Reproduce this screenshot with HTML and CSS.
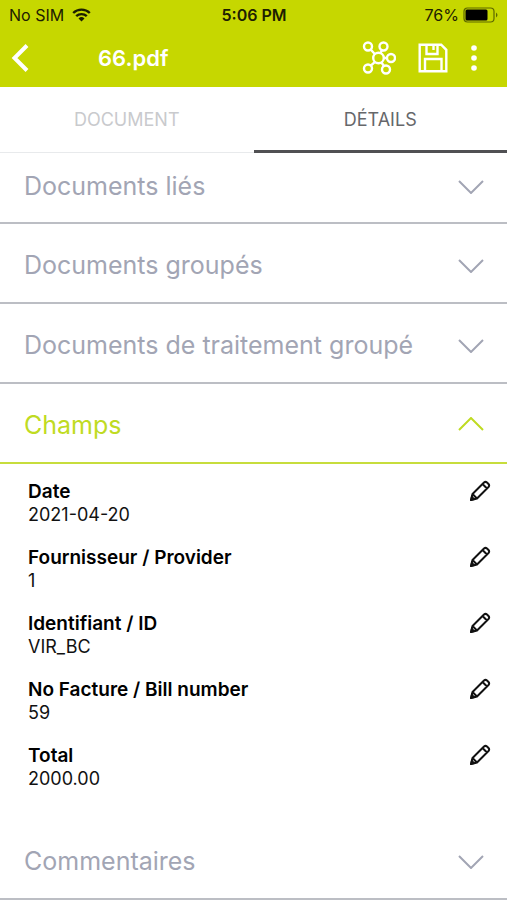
FILE: index.html
```html
<!DOCTYPE html>
<html lang="fr">
<head>
<meta charset="utf-8">
<meta name="viewport" content="width=device-width, initial-scale=1">
<title>66.pdf</title>
<link rel="stylesheet" href="styles.css">
</head>
<body>
<svg class="sprite" aria-hidden="true">
  <symbol id="down" viewBox="0 0 28 16"><path d="M2 3l12 12L26 3"/></symbol>
  <symbol id="up" viewBox="0 0 28 16"><path d="M2 13L14 1l12 12"/></symbol>
  <symbol id="pencil" viewBox="0 0 22 22"><path d="M2 20l1.500-6L15 2.500q1.500-1.300 3 0l1.500 1.500q1.300 1.500 0 3L8 18.500zM3.500 14L8 18.500M13.500 4l4.500 4.500"/><path class="tip" d="M1 21l1.300-6 4.700 4.700z"/></symbol>
</svg>
<header class="header">
  <div class="status">
    <div class="carrier">
      <span>No SIM</span>
      <svg width="19" height="14" viewBox="0 0 19 14" aria-hidden="true"><path d="M1.200 5a12 12 0 0 1 16.600 0M4.200 8.200a7.700 7.700 0 0 1 10.600 0" fill="none" stroke="currentColor" stroke-width="2.400"/><path d="M6.500 10.500a4.400 4.400 0 0 1 6 0l-3 3z" fill="currentColor"/></svg>
    </div>
    <span class="clock">5:06 PM</span>
    <div class="power">
      <span>76%</span>
      <svg width="36" height="16" viewBox="0 0 36 16" aria-hidden="true"><rect x="1" y="1" width="30" height="14" rx="3.500" fill="none" stroke="#5d6800" stroke-width="1.200"/><rect x="2.500" y="2.500" width="22" height="11" rx="1.500" fill="#000"/><path d="M33 5.500q3 2.500 0 5z" fill="#5d6800"/></svg>
    </div>
  </div>
  <div class="nav">
    <button class="icon-button" type="button" aria-label="Retour"><svg width="20" height="30" viewBox="0 0 20 30"><path d="M16 2.500L3.500 15 16 27.500" stroke-width="4"/></svg></button>
    <h1 class="title">66.pdf</h1>
    <div class="actions">
      <button class="icon-button" type="button" aria-label="Liens"><svg width="34" height="34" viewBox="0 0 34 34" stroke-width="2.400"><circle cx="16.500" cy="17" r="5.300"/><circle cx="6" cy="5.500" r="4"/><circle cx="21.500" cy="5.500" r="4"/><circle cx="29" cy="17" r="4"/><circle cx="6" cy="27.500" r="4"/><circle cx="24" cy="28.500" r="4"/><path d="M8.700 8.500l4.300 4.700M20 9.200l-1.600 3M21.700 17H25M8.800 24.600l4.200-3.800M22 25l-2.800-3.700"/></svg></button>
      <button class="icon-button" type="button" aria-label="Enregistrer"><svg width="30" height="30" viewBox="0 0 30 30" stroke-width="2.400"><path d="M1.700 1.700h21.500l5.100 5.100v21.500H1.700zM8.500 2v9h11V2M7 28V16h16.500v12M15.500 2v5"/></svg></button>
      <button class="icon-button" type="button" aria-label="Plus"><svg width="8" height="28" viewBox="0 0 8 28"><g fill="#fff" stroke="none"><circle cx="4" cy="4" r="2.800"/><circle cx="4" cy="14" r="2.800"/><circle cx="4" cy="24" r="2.800"/></g></svg></button>
    </div>
  </div>
</header>
<nav class="tabs">
  <button class="tab" type="button">DOCUMENT</button>
  <button class="tab tab-active" type="button">DÉTAILS</button>
</nav>
<main>
  <button class="section section-first" type="button"><span>Documents liés</span><svg class="chevron"><use href="#down"/></svg></button>
  <button class="section" type="button"><span>Documents groupés</span><svg class="chevron"><use href="#down"/></svg></button>
  <button class="section" type="button"><span>Documents de traitement groupé</span><svg class="chevron"><use href="#down"/></svg></button>
  <button class="section section-open" type="button" aria-expanded="true"><span>Champs</span><svg class="chevron"><use href="#up"/></svg></button>
  <div class="fields">
    <div class="field"><dl><dt>Date</dt><dd>2021-04-20</dd></dl><button class="edit" type="button" aria-label="Modifier Date"><svg class="pencil"><use href="#pencil"/></svg></button></div>
    <div class="field"><dl><dt>Fournisseur / Provider</dt><dd>1</dd></dl><button class="edit" type="button" aria-label="Modifier Fournisseur"><svg class="pencil"><use href="#pencil"/></svg></button></div>
    <div class="field"><dl><dt>Identifiant / ID</dt><dd>VIR_BC</dd></dl><button class="edit" type="button" aria-label="Modifier Identifiant"><svg class="pencil"><use href="#pencil"/></svg></button></div>
    <div class="field"><dl><dt>No Facture / Bill number</dt><dd>59</dd></dl><button class="edit" type="button" aria-label="Modifier No Facture"><svg class="pencil"><use href="#pencil"/></svg></button></div>
    <div class="field"><dl><dt>Total</dt><dd>2000.00</dd></dl><button class="edit" type="button" aria-label="Modifier Total"><svg class="pencil"><use href="#pencil"/></svg></button></div>
  </div>
  <button class="section" type="button"><span>Commentaires</span><svg class="chevron"><use href="#down"/></svg></button>
</main>
</body>
</html>
```
FILE: styles.css
```css
* { box-sizing: border-box; }
body { margin: 0; background: #fff; color: #111; font-family: Inter, "Liberation Sans", sans-serif; }
button { margin: 0; padding: 0; border: 0; background: none; font: inherit; color: inherit; cursor: pointer; }
.sprite { position: absolute; width: 0; height: 0; }
.header { background: #c6d700; }
.status { display: grid; grid-template-columns: 1fr auto 1fr; align-items: center; height: 29px; padding: 0 8px 0 9px; font-size: 16px; color: #1d2000; }
.carrier, .power { display: flex; align-items: center; gap: 8px; }
.power { justify-content: flex-end; gap: 4px; }
.clock { font-weight: 600; }
.nav { display: flex; align-items: center; height: 58px; padding: 0 29px 0 11px; }
.icon-button { display: flex; }
.icon-button svg { fill: none; stroke: #fff; }
.title { flex: 1; margin: 0 0 0 67px; font-size: 22px; line-height: 28px; font-weight: 600; color: #fff; }
.actions { display: flex; align-items: center; gap: 22px; }
.tabs { display: grid; grid-template-columns: 1fr 1fr; height: 66px; }
.tab { border-bottom: 1px solid #e8eaec; font-size: 18px; color: #c9cacd; }
.tab-active { padding-top: 2px; border-bottom: 3px solid #505053; color: #66676a; }
.section { display: flex; align-items: center; justify-content: space-between; width: 100%; height: 80px; padding: 4px 22px 0 24px; border-bottom: 2px solid #bcbec4; font-size: 25px; line-height: 32px; color: #a2a5b4; text-align: left; }
.section-first { height: 71px; padding-top: 0; padding-bottom: 4px; }
.section-open { border-color: #c7dd3c; color: #bfdb22; }
.chevron { width: 28px; height: 16px; fill: none; stroke: currentColor; stroke-width: 2; }
.fields { display: grid; gap: 20px; padding: 16px 16px 30px 28px; }
.field { display: flex; justify-content: space-between; align-items: flex-start; font-size: 18px; line-height: 23px; }
dl, dd { margin: 0; }
dt { font-size: 19px; font-weight: 600; color: #000; }
.edit { display: flex; }
.pencil { width: 22px; height: 22px; fill: none; stroke: #111; stroke-width: 2; stroke-linejoin: round; }
.tip { fill: #111; stroke: none; }
```
